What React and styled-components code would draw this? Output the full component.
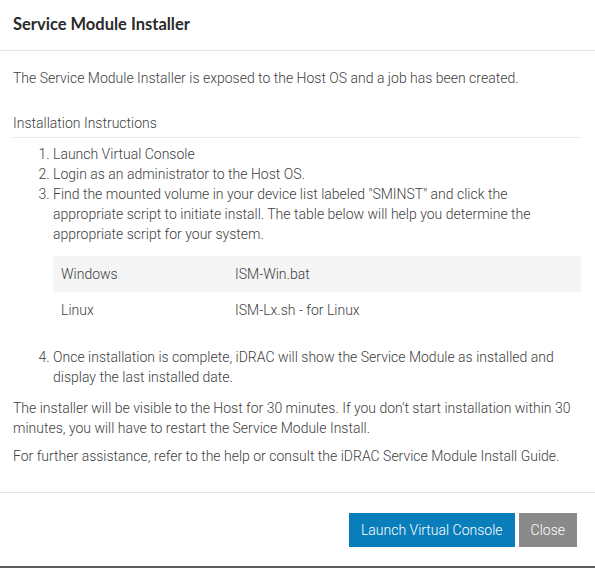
import styled, { createGlobalStyle } from "styled-components";

const GlobalStyle = createGlobalStyle`
  html, body {
    margin: 0;
    padding: 0;
    background: #ffffff;
  }
  body {
    font-family: Roboto, "Liberation Sans", sans-serif;
    color: #444444;
  }
`;

const scripts = [
  { os: "Windows", file: "ISM-Win.bat" },
  { os: "Linux", file: "ISM-Lx.sh - for Linux" },
];

const App = () => {
  return (
    <>
      <GlobalStyle />
      <Modal>
        <Header>
          <Title>Service Module Installer</Title>
        </Header>
        <Body>
          <Text>
            The Service Module Installer is exposed to the Host OS and a job has
            been created.
          </Text>
          <SectionTitle>Installation Instructions</SectionTitle>
          <Steps>
            <li>Launch Virtual Console</li>
            <li>Login as an administrator to the Host OS.</li>
            <li>
              Find the mounted volume in your device list labeled "SMINST" and
              click the appropriate script to initiate install. The table below
              will help you determine the appropriate script for your system.
              <ScriptTable>
                <tbody>
                  {scripts.map((row, i) => (
                    <Row key={row.os} $striped={i % 2 === 0}>
                      <Cell $first>{row.os}</Cell>
                      <Cell>{row.file}</Cell>
                    </Row>
                  ))}
                </tbody>
              </ScriptTable>
            </li>
            <li>
              Once installation is complete, iDRAC will show the Service Module
              as installed and display the last installed date.
            </li>
          </Steps>
          <Text $tight>
            The installer will be visible to the Host for 30 minutes. If you
            don't start installation within 30 minutes, you will have to restart
            the Service Module Install.
          </Text>
          <Text $tight>
            For further assistance, refer to the help or consult the iDRAC
            Service Module Install Guide.
          </Text>
        </Body>
        <Footer>
          <Button $primary>Launch Virtual Console</Button>
          <Button>Close</Button>
        </Footer>
      </Modal>
    </>
  );
};

export default App;

const Modal = styled.div`
  width: 595px;
  height: 568px;
  box-sizing: border-box;
  background: #fff;
  border-bottom: 2px solid #5a5a5a;
  display: flex;
  flex-direction: column;
`;

const Header = styled.div`
  height: 51px;
  box-sizing: border-box;
  padding: 14px 13px 0;
  border-bottom: 1px solid #e5e5e5;
`;

const Title = styled.h4`
  margin: 0;
  font-family: Lato, "Open Sans", sans-serif;
  font-size: 16.5px;
  font-weight: 700;
  color: #2a2a2a;
  line-height: 20px;
`;

const Body = styled.div`
  padding: 17px 14px 0 13px;
  flex: 1;
`;

const Text = styled.p`
  margin: ${(p) => (p.$tight ? "0 0 8px" : "0 0 25px")};
  font-size: 14px;
  line-height: 20px;
  font-weight: 300;
  color: #404040;
`;

const SectionTitle = styled.div`
  font-size: 14px;
  line-height: 20px;
  font-weight: 300;
  color: #404040;
  padding-bottom: 4px;
  border-bottom: 1px solid #e8e8e8;
  margin-bottom: 6px;
`;

const Steps = styled.ol`
  margin: 0 0 11px;
  padding-left: 40px;
  font-size: 14px;
  line-height: 20px;
  font-weight: 300;
  color: #404040;
`;

const ScriptTable = styled.table`
  width: 100%;
  border-collapse: collapse;
  margin: 12px 0 19px;
`;

const Row = styled.tr`
  background: ${(p) => (p.$striped ? "#f5f5f5" : "transparent")};
`;

const Cell = styled.td`
  height: 36px;
  padding: 0 8px;
  width: ${(p) => (p.$first ? "158px" : "auto")};
  vertical-align: middle;
`;

const Footer = styled.div`
  height: 74px;
  box-sizing: border-box;
  border-top: 1px solid #e5e5e5;
  display: flex;
  justify-content: flex-end;
  align-items: flex-start;
  gap: 4px;
  padding: 20px 18px 0 0;
`;

const Button = styled.button`
  height: 34px;
  padding: 0 12px;
  border: none;
  font-family: Roboto, "Liberation Sans", sans-serif;
  font-size: 14px;
  font-weight: 300;
  color: #fff;
  background: ${(p) => (p.$primary ? "#0a7dbb" : "#8a8a8a")};
  cursor: pointer;
`;
